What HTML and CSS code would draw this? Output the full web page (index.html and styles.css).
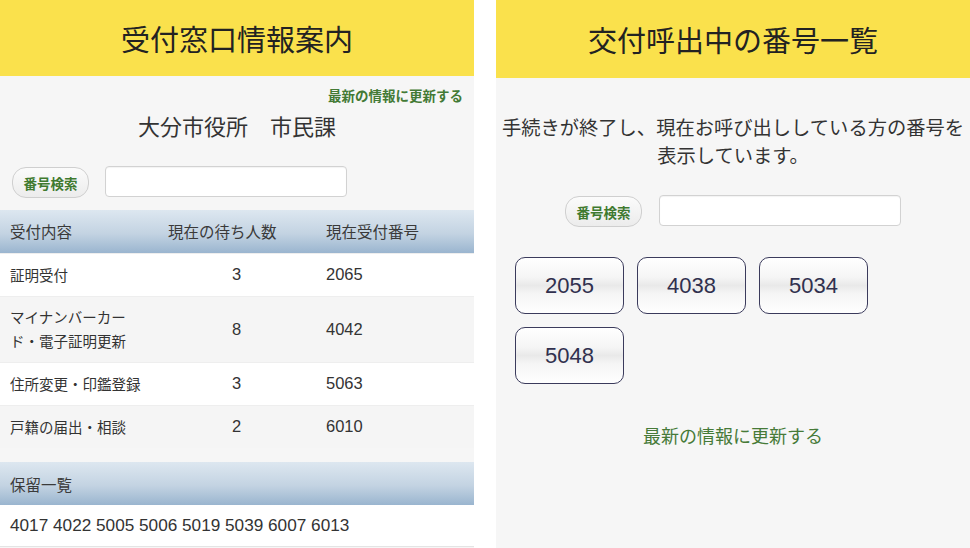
FILE: index.html
```html
<!DOCTYPE html>
<html lang="ja">
<head>
<meta charset="utf-8">
<title>受付窓口情報案内</title>
<link rel="stylesheet" href="styles.css">
</head>
<body>
<div class="screens">
  <section class="panel panel-left">
    <header class="bar bar-left">受付窓口情報案内</header>
    <div class="refresh-top"><a class="refresh-link-small" href="#">最新の情報に更新する</a></div>
    <h2 class="office">大分市役所　市民課</h2>
    <div class="search search-left">
      <button class="search-btn" type="button">番号検索</button>
      <input class="search-input" type="text">
    </div>
    <table class="status">
      <thead>
        <tr><th class="c1">受付内容</th><th class="c2">現在の待ち人数</th><th class="c3">現在受付番号</th></tr>
      </thead>
      <tbody>
        <tr class="r-white"><td class="c1">証明受付</td><td class="c2 num">3</td><td class="c3 num">2065</td></tr>
        <tr class="r-gray tall"><td class="c1">マイナンバーカー<br>ド・電子証明更新</td><td class="c2 num">8</td><td class="c3 num">4042</td></tr>
        <tr class="r-white"><td class="c1">住所変更・印鑑登録</td><td class="c2 num">3</td><td class="c3 num">5063</td></tr>
        <tr class="r-gray"><td class="c1">戸籍の届出・相談</td><td class="c2 num">2</td><td class="c3 num">6010</td></tr>
      </tbody>
    </table>
    <div class="hold">
      <div class="hold-head">保留一覧</div>
      <div class="hold-body">4017 4022 5005 5006 5019 5039 6007 6013</div>
    </div>
  </section>

  <section class="panel panel-right">
    <header class="bar bar-right">交付呼出中の番号一覧</header>
    <p class="notice">手続きが終了し、現在お呼び出ししている方の番号を<br>表示しています。</p>
    <div class="search search-right">
      <button class="search-btn" type="button">番号検索</button>
      <input class="search-input" type="text">
    </div>
    <div class="calls">
      <div class="call">2055</div>
      <div class="call">4038</div>
      <div class="call">5034</div>
      <div class="call">5048</div>
    </div>
    <div class="refresh-bottom"><a class="refresh-link-large" href="#">最新の情報に更新する</a></div>
  </section>
</div>
</body>
</html>
```

FILE: styles.css
```css
* { box-sizing: border-box; }
html, body {
  margin: 0;
  padding: 0;
  background: #ffffff;
}
body {
  width: 970px;
  height: 548px;
  overflow: hidden;
  font-family: "Noto Sans CJK JP", "Noto Sans", sans-serif;
  color: #333333;
}
.screens {
  display: flex;
  gap: 22px;
  height: 548px;
}
.panel {
  width: 474px;
  height: 548px;
  background: #f6f6f6;
  display: flex;
  flex-direction: column;
}
.bar {
  background: #fae14c;
  display: flex;
  align-items: center;
  justify-content: center;
  font-size: 29px;
  font-weight: 400;
  color: #222222;
}
.bar-left { height: 76px; }
.bar-right { height: 78px; }

.refresh-top {
  text-align: right;
  padding-right: 11px;
  margin-top: 10px;
  line-height: 17px;
}
.refresh-link-small {
  font-size: 13.5px;
  font-weight: 700;
  color: #437a35;
  text-decoration: none;
}
.office {
  margin: 6px 0 0 0;
  text-align: center;
  font-size: 22px;
  font-weight: 400;
  line-height: 30px;
  color: #333333;
}
.search {
  display: flex;
  align-items: center;
}
.search-left {
  padding-left: 12px;
  gap: 16px;
  margin-top: 27px;
}
.search-right {
  justify-content: center;
  gap: 17px;
  margin-top: 27px;
}
.search-btn {
  width: 77px;
  height: 31px;
  border: 1px solid #cfcfcf;
  border-radius: 14px;
  background: linear-gradient(#fbfbfb, #ececec);
  font-family: "Noto Sans CJK JP", sans-serif;
  font-size: 13.5px;
  font-weight: 700;
  color: #3f7a2f;
  padding: 0;
}
.search-input {
  width: 242px;
  height: 31px;
  border: 1px solid #d2d2d2;
  border-radius: 4px;
  background: #ffffff;
  box-shadow: inset 0 1px 1px rgba(0,0,0,0.05);
}
.search-left .search-input { margin-top: -2px; }
.search-right .search-input { margin-top: -3px; }

.status {
  margin-top: 12px;
  width: 474px;
  border-collapse: collapse;
  table-layout: fixed;
}
.status th {
  height: 43px;
  background: linear-gradient(#dde7f0, #c3d3e2 55%, #9ab5cf);
  font-size: 15.5px;
  font-weight: 400;
  color: #3a3a3a;
  text-align: left;
  padding: 0;
}
.status td {
  height: 43px;
  font-size: 14.5px;
  color: #333333;
  padding: 0;
  border-top: 1px solid #eeeeee;
}
.status .c1 { width: 168px; padding-left: 10px; }
.status .c2 { width: 158px; }
.status td.c2 { padding-left: 64px; }
.status .num {
  font-family: "Liberation Sans", Arial, sans-serif;
  font-size: 16.5px;
}
.status tr.tall td { height: 66px; line-height: 24px; }
.r-white td { background: #ffffff; }
.r-gray td { background: #f5f5f5; }

.hold { margin-top: 14px; }
.hold-head {
  height: 43px;
  display: flex;
  align-items: center;
  padding-left: 10px;
  background: linear-gradient(#dde7f0, #c3d3e2 55%, #9ab5cf);
  font-size: 15.5px;
  color: #3a3a3a;
}
.hold-body {
  height: 42px;
  display: flex;
  align-items: center;
  padding-left: 10px;
  background: #ffffff;
  border-bottom: 1px solid #e4e4e4;
  font-family: "Liberation Sans", Arial, sans-serif;
  font-size: 17.2px;
  color: #333333;
}

.notice {
  margin: 35px 0 0 0;
  text-align: center;
  font-size: 19.3px;
  line-height: 28px;
  color: #333333;
  white-space: nowrap;
}
.calls {
  margin-top: 30px;
  padding-left: 19px;
  display: grid;
  grid-template-columns: repeat(3, 109px);
  column-gap: 13px;
  row-gap: 13px;
}
.call {
  height: 57px;
  border: 1.5px solid #3b3b5c;
  border-radius: 10px;
  background: linear-gradient(#ffffff, #f5f5f5 35%, #e9e9e9 50%, #f5f5f5 65%, #ffffff);
  display: flex;
  align-items: center;
  justify-content: center;
  font-family: "Liberation Sans", Arial, sans-serif;
  font-size: 22px;
  color: #30304e;
}
.refresh-bottom {
  margin-top: 39px;
  text-align: center;
  line-height: 24px;
}
.refresh-link-large {
  font-size: 18px;
  color: #467a38;
  text-decoration: none;
}
```
